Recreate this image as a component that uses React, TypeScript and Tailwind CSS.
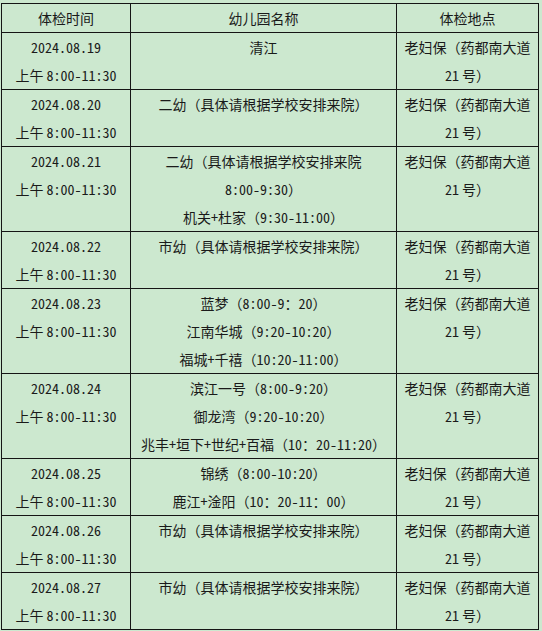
import React from "react";

type Row = { date: string; mid: string[] };

const LOC = "老妇保（药都南大道 21 号）";

const rows: Row[] = [
  { date: "2024.08.19", mid: ["清江"] },
  { date: "2024.08.20", mid: ["二幼（具体请根据学校安排来院）"] },
  { date: "2024.08.21", mid: ["二幼（具体请根据学校安排来院8:00-9:30）", "机关+杜家（9:30-11:00）"] },
  { date: "2024.08.22", mid: ["市幼（具体请根据学校安排来院）"] },
  { date: "2024.08.23", mid: ["蓝梦（8:00-9：20）", "江南华城（9:20-10:20）", "福城+千禧（10:20-11:00）"] },
  { date: "2024.08.24", mid: ["滨江一号（8:00-9:20）", "御龙湾（9:20-10:20）", "兆丰+垣下+世纪+百福（10：20-11:20）"] },
  { date: "2024.08.25", mid: ["锦绣（8:00-10:20）", "鹿江+淦阳（10：20-11：00）"] },
  { date: "2024.08.26", mid: ["市幼（具体请根据学校安排来院）"] },
  { date: "2024.08.27", mid: ["市幼（具体请根据学校安排来院）"] },
];

const cell = "border border-[#151515] p-0 align-top text-center";

function T({ text }: { text: string }) {
  const parts = text.split(/([!-~]+)/);
  return (
    <>
      {parts.map((p, i) =>
        i % 2 === 1 ? (
          <span key={i} className="whitespace-nowrap [font-feature-settings:'hwid'_1]">
            {p}
          </span>
        ) : (
          <React.Fragment key={i}>{p}</React.Fragment>
        )
      )}
    </>
  );
}

export default function App() {
  return (
    <div className="min-h-[631px] w-[542px] bg-[#cce8cf] pt-[3px] pl-[1px]">
      <table
        className="w-[537px] table-fixed border-collapse text-[14px] leading-[28px] text-[#1a1a1a] [text-spacing-trim:space-all]"
        style={{ fontFamily: '"Noto Sans CJK SC", "Noto Sans", sans-serif' }}
      >
        <colgroup>
          <col className="w-[129px]" />
          <col className="w-[266px]" />
          <col className="w-[142px]" />
        </colgroup>
        <thead>
          <tr>
            <th className={cell + " font-normal"}>体检时间</th>
            <th className={cell + " font-normal"}>幼儿园名称</th>
            <th className={cell + " font-normal"}>体检地点</th>
          </tr>
        </thead>
        <tbody>
          {rows.map((r) => (
            <tr key={r.date}>
              <td className={cell}>
                <div>
                  <T text={r.date} />
                </div>
                <div>
                  <T text="上午 8:00-11:30" />
                </div>
              </td>
              <td className={cell}>
                {r.mid.map((m, i) => (
                  <div key={i}>
                    <T text={m} />
                  </div>
                ))}
              </td>
              <td className={cell}>
                <div>
                  <T text={LOC} />
                </div>
              </td>
            </tr>
          ))}
        </tbody>
      </table>
    </div>
  );
}
